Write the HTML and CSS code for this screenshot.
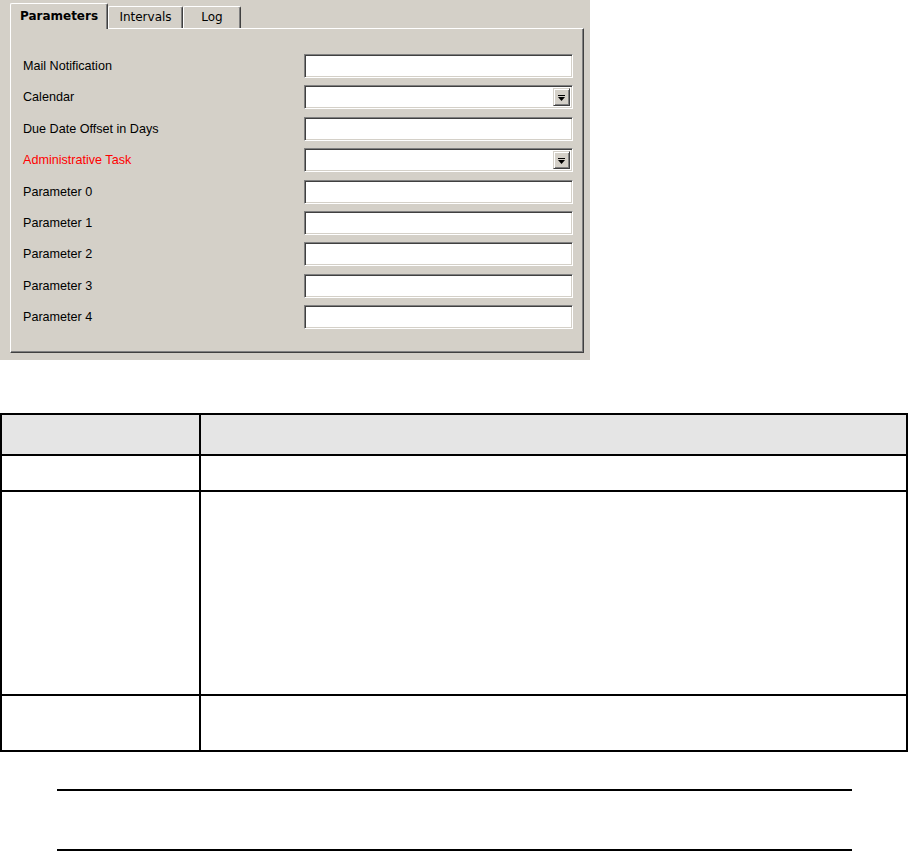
FILE: index.html
```html
<!DOCTYPE html>
<html lang="en">
<head>
    <meta charset="UTF-8">
    <meta name="viewport" content="width=device-width, initial-scale=1.0">
    <title>Task Parameters</title>
    <link rel="stylesheet" href="styles.css">
</head>
<body>
    <div class="dialog">
        <div class="tabs">
            <div class="tab active">Parameters</div>
            <div class="tab tab-intervals">Intervals</div>
            <div class="tab tab-log">Log</div>
        </div>
        <div class="panel">
            <div class="form">
                <label>Mail Notification</label>
                <div class="field"></div>

                <label>Calendar</label>
                <div class="field combo">
                    <span class="combo-btn">
                        <svg width="7" height="6" viewBox="0 0 7 6"><rect x="0" y="0" width="7" height="1" fill="#000"/><polygon points="0,2 7,2 3.5,6" fill="#000"/></svg>
                    </span>
                </div>

                <label>Due Date Offset in Days</label>
                <div class="field"></div>

                <label class="required">Administrative Task</label>
                <div class="field combo">
                    <span class="combo-btn">
                        <svg width="7" height="6" viewBox="0 0 7 6"><rect x="0" y="0" width="7" height="1" fill="#000"/><polygon points="0,2 7,2 3.5,6" fill="#000"/></svg>
                    </span>
                </div>

                <label>Parameter 0</label>
                <div class="field"></div>

                <label>Parameter 1</label>
                <div class="field"></div>

                <label>Parameter 2</label>
                <div class="field"></div>

                <label>Parameter 3</label>
                <div class="field"></div>

                <label>Parameter 4</label>
                <div class="field"></div>
            </div>
        </div>
    </div>

    <table class="grid">
        <tr class="row-head"><th class="col-name"></th><th></th></tr>
        <tr class="row-a"><td></td><td></td></tr>
        <tr class="row-b"><td></td><td></td></tr>
        <tr class="row-c"><td></td><td></td></tr>
    </table>

    <div class="note"></div>
</body>
</html>
```

FILE: styles.css
```css
body {
    margin: 0;
    background: #fff;
    font-family: "Liberation Sans", Arial, sans-serif;
    font-size: 12.6px;
    color: #000;
}

/* dialog */
.dialog {
    width: 590px;
    height: 360px;
    box-sizing: border-box;
    background: #d4d0c8;
    padding: 3px 6px 7px 10px;
    display: flex;
    flex-direction: column;
}
.tabs {
    display: flex;
    align-items: flex-end;
    height: 25px;
}
.tab {
    box-sizing: border-box;
    height: 22px;
    display: flex;
    align-items: center;
    justify-content: center;
    padding-bottom: 1px;
    font-family: "DejaVu Sans", sans-serif;
    font-size: 12px;
    border-top: 1px solid #fff;
    border-left: 1px solid #fff;
    border-right: 1px solid #404040;
    box-shadow: inset -1px 0 #808080;
    border-radius: 2px 2px 0 0;
}
.tab.active {
    width: 98px;
    height: 26px;
    margin-bottom: -1px;
    padding-bottom: 2px;
    font-weight: bold;
    background: #d4d0c8;
    position: relative;
    z-index: 1;
}
.tab-intervals { width: 75px; }
.tab-log { width: 58px; }

.panel {
    flex: 1;
    box-sizing: border-box;
    border-top: 1px solid #fff;
    border-left: 1px solid #fff;
    border-right: 1px solid #404040;
    border-bottom: 1px solid #404040;
    box-shadow: inset -1px -1px #808080;
    padding: 25px 9px 0 12px;
}
.form {
    display: grid;
    grid-template-columns: 281px 269px;
    grid-auto-rows: 24px;
    row-gap: 7.4px;
}
.form label {
    align-self: center;
}
.form label.required { color: #ff0000; }

.field {
    box-sizing: border-box;
    background: #fff;
    border-top: 1px solid #808080;
    border-left: 1px solid #808080;
    border-bottom: 1px solid #fff;
    border-right: 1px solid #fff;
    box-shadow: inset 1px 1px #404040, inset -1px -1px #d4d0c8;
}
.combo {
    display: flex;
    justify-content: flex-end;
    padding: 2px 2px 2px 0;
}
.combo-btn {
    box-sizing: border-box;
    width: 17px;
    height: 100%;
    background: #d4d0c8;
    border-top: 1px solid #d4d0c8;
    border-left: 1px solid #d4d0c8;
    border-right: 1px solid #404040;
    border-bottom: 1px solid #404040;
    box-shadow: inset 1px 1px #fff, inset -1px -1px #808080;
    display: flex;
    align-items: center;
    justify-content: center;
}
.combo-btn svg { display: block; margin-top: 1px; }

/* table */
.grid {
    margin-top: 53px;
    width: 908px;
    border-collapse: collapse;
}
.grid th, .grid td {
    border: 2px solid #000;
    padding: 0;
}
.grid th { background: #e5e5e5; }
.col-name { width: 197px; }
.row-head th { height: 39px; }
.row-a td { height: 34px; }
.row-b td { height: 202px; }
.row-c td { height: 54px; }

.note {
    margin: 37px 0 0 57px;
    width: 795px;
    height: 58px;
    border-top: 2px solid #000;
    border-bottom: 2px solid #000;
}
```
